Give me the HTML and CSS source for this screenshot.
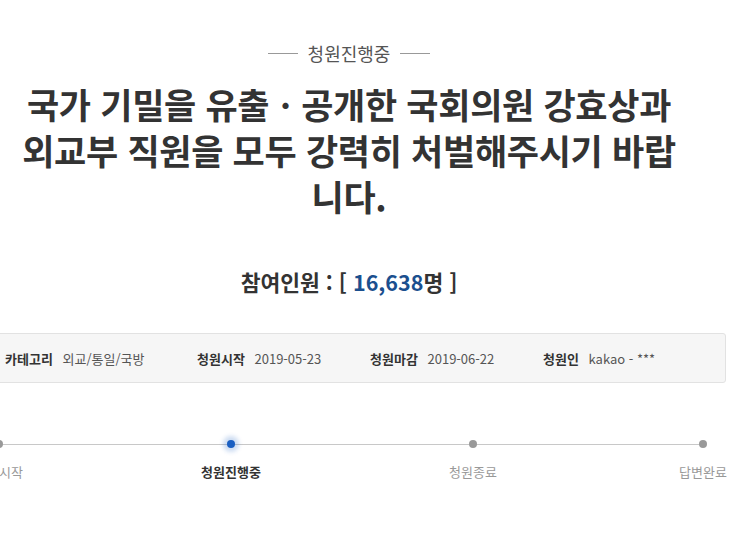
FILE: index.html
```html
<!DOCTYPE html>
<html lang="ko">
<head>
    <meta charset="UTF-8">
    <meta name="viewport" content="width=device-width, initial-scale=1.0">
    <title>청원진행중</title>
    <link rel="stylesheet" href="styles.css">
</head>
<body>
    <div class="petition">
        <div class="status">
            <span class="status-line"></span>
            <span class="status-text">청원진행중</span>
            <span class="status-line"></span>
        </div>

        <h1 class="title">국가 기밀을 유출ㆍ공개한 국회의원 강효상과<br>외교부 직원을 모두 강력히 처벌해주시기 바랍<br>니다.</h1>

        <p class="count">참여인원 : [ <span class="count-num">16,638</span>명 ]</p>

        <ul class="info">
            <li><strong>카테고리</strong> 외교/통일/국방</li>
            <li><strong>청원시작</strong> 2019-05-23</li>
            <li><strong>청원마감</strong> 2019-06-22</li>
            <li><strong>청원인</strong> kakao - ***</li>
        </ul>

        <ol class="steps">
            <li class="step"><span class="dot"></span>청원시작</li>
            <li class="step current"><span class="dot"></span>청원진행중</li>
            <li class="step"><span class="dot"></span>청원종료</li>
            <li class="step"><span class="dot"></span>답변완료</li>
        </ol>
    </div>
</body>
</html>
```

FILE: styles.css
```css
body {
    margin: 0;
    background-color: #fff;
    color: #333;
    font-family: "Noto Sans CJK KR", "Noto Sans", sans-serif;
    overflow: hidden;
}

.petition {
    width: 758px;
    margin-left: -30px;
    padding-top: 38px;
}

.status {
    display: flex;
    justify-content: center;
    align-items: center;
    gap: 10px;
    height: 30px;
}

.status-line {
    width: 30px;
    height: 1px;
    background-color: #999;
}

.status-text {
    font-size: 18px;
    color: #555;
}

.title {
    margin: 13px 0 0;
    text-align: center;
    font-size: 35px;
    line-height: 46px;
    font-weight: 700;
    color: #333;
    letter-spacing: -0.3px;
}

.count {
    margin: 47px 0 0;
    text-align: center;
    font-size: 21.5px;
    font-weight: 700;
    color: #333;
}

.count-num {
    color: #1b4f8e;
}

.info {
    display: flex;
    list-style: none;
    margin: 36px 2px 0 0;
    padding: 0 0 0 34px;
    height: 48px;
    align-items: center;
    background-color: #f6f6f6;
    border: 1px solid #e2e2e2;
    border-radius: 3px;
    font-size: 13px;
    color: #555;
}

.info li {
    width: 173px;
}

.info li:first-child {
    width: 192px;
}

.info li:last-child {
    width: auto;
}

.info strong {
    color: #333;
    margin-right: 6px;
}

.steps {
    display: grid;
    grid-template-columns: 232px 242px 230px 80px;
    list-style: none;
    margin: 57px 0 0 -11px;
    padding: 0;
    background: linear-gradient(#c8c8c8, #c8c8c8) no-repeat;
    background-size: 704px 1px;
    background-position: 40px 4px;
    font-size: 13px;
    color: #999;
}

.step {
    width: 80px;
    text-align: center;
}

.dot {
    display: block;
    width: 8px;
    height: 8px;
    margin: 0 auto 14px;
    border-radius: 50%;
    background-color: #999;
}

.current {
    color: #333;
    font-weight: 700;
}

.current .dot {
    background-color: #1a5fc2;
    box-shadow: 0 0 4px 4px rgba(26, 95, 194, 0.22);
}
```
